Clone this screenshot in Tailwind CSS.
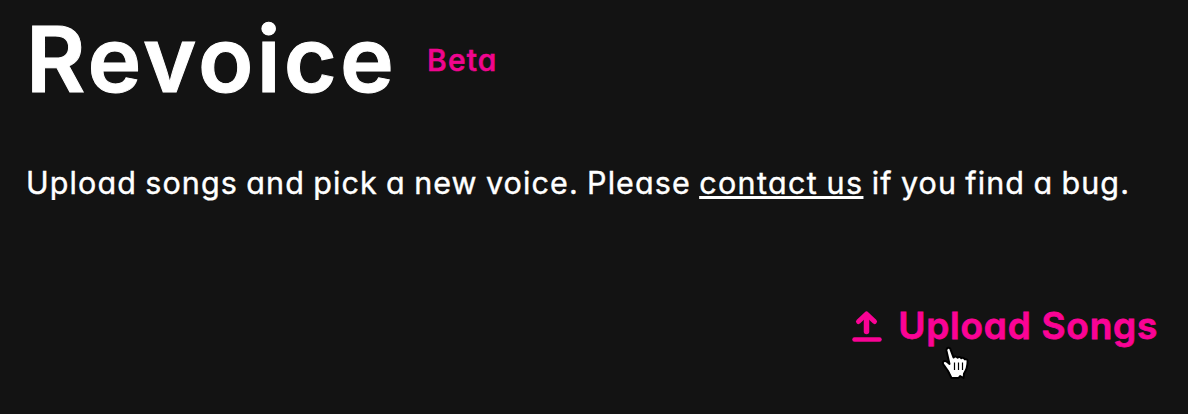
<!DOCTYPE html>
<html lang="en">
<head>
  <meta charset="UTF-8" />
  <title>Revoice</title>
  <script src="https://cdn.jsdelivr.net/npm/@tailwindcss/browser@4"></script>
</head>
<body class="bg-[#131313] text-white h-[414px] overflow-hidden font-[Inter,sans-serif] [font-feature-settings:'cv11']">
  <main class="relative flex flex-col h-full pl-[26px] pr-[30px] whitespace-nowrap">
    <!-- Title -->
    <header class="flex items-center h-[120px]">
      <h1 class="w-[401px] -mt-[2px] text-[91px] leading-[120px] font-semibold tracking-[3.3px] [-webkit-text-stroke:1px_currentColor]">Revoice</h1>
      <span class="text-[30px] font-medium tracking-[1.2px] text-[#f0058f] [-webkit-text-stroke:0.6px_currentColor]">Beta</span>
    </header>

    <p class="mt-[40px] text-[30.5px] leading-[46px] tracking-[1.1px] [word-spacing:-1.4px] [-webkit-text-stroke:0.4px_currentColor]">Upload songs and pick a new voice. Please <a href="#" class="tracking-[1.35px] underline decoration-[3px] underline-offset-[2px]">contact us</a> if you find a bug.</p>

    <!-- Upload -->
    <button class="mt-[97px] self-end flex items-center gap-[16px] h-[46px] text-[#fa0395] cursor-pointer">
      <svg class="w-[30px] h-[32px]" viewBox="0 0 30 32" fill="none" stroke="currentColor" stroke-linecap="round" stroke-linejoin="round">
        <path d="M14.500 21.500V6" stroke-width="5.500" />
        <path d="M6.500 11.500L14.500 4l8 7.500" stroke-width="5" />
        <path d="M2.500 29.500h25" stroke-width="4.500" />
      </svg>
      <span class="text-[37px] leading-[46px] font-semibold tracking-[0.75px] [-webkit-text-stroke:0.8px_currentColor]">Upload Songs</span>
    </button>

    <!-- Pointer -->
    <svg class="absolute left-[938px] top-[344px] w-[34px] h-[38px]" viewBox="0 0 34 38">
      <path d="M9 4.500c1-1.200 3-.8 3.500.8l3 8.200c1-1.200 3-1.200 4 .2 1.200-1.200 3-.8 3.800.6 1.300-.9 3-.4 3.500 1 1.200-.5 2.800.3 2.800 1.800 0 5-.6 8.400-3.600 12.400l-.4 4.500-3.500-2-1.600 2h-7l-2.500-5c-1-3-3-4.500-4.500-7-1.400-1.500-2-3-1.500-4 1-1.500 3-1 4.500.3l2 1.600L8.500 7c-.2-1 0-1.800.5-2.500z" fill="white" stroke="black" stroke-width="2" stroke-linejoin="round" />
      <path d="M16.500 18.500v7.500M20.500 18.500v7.500M24.500 18.500v7.500" stroke="black" stroke-width="1.200" />
    </svg>
  </main>
</body>
</html>
